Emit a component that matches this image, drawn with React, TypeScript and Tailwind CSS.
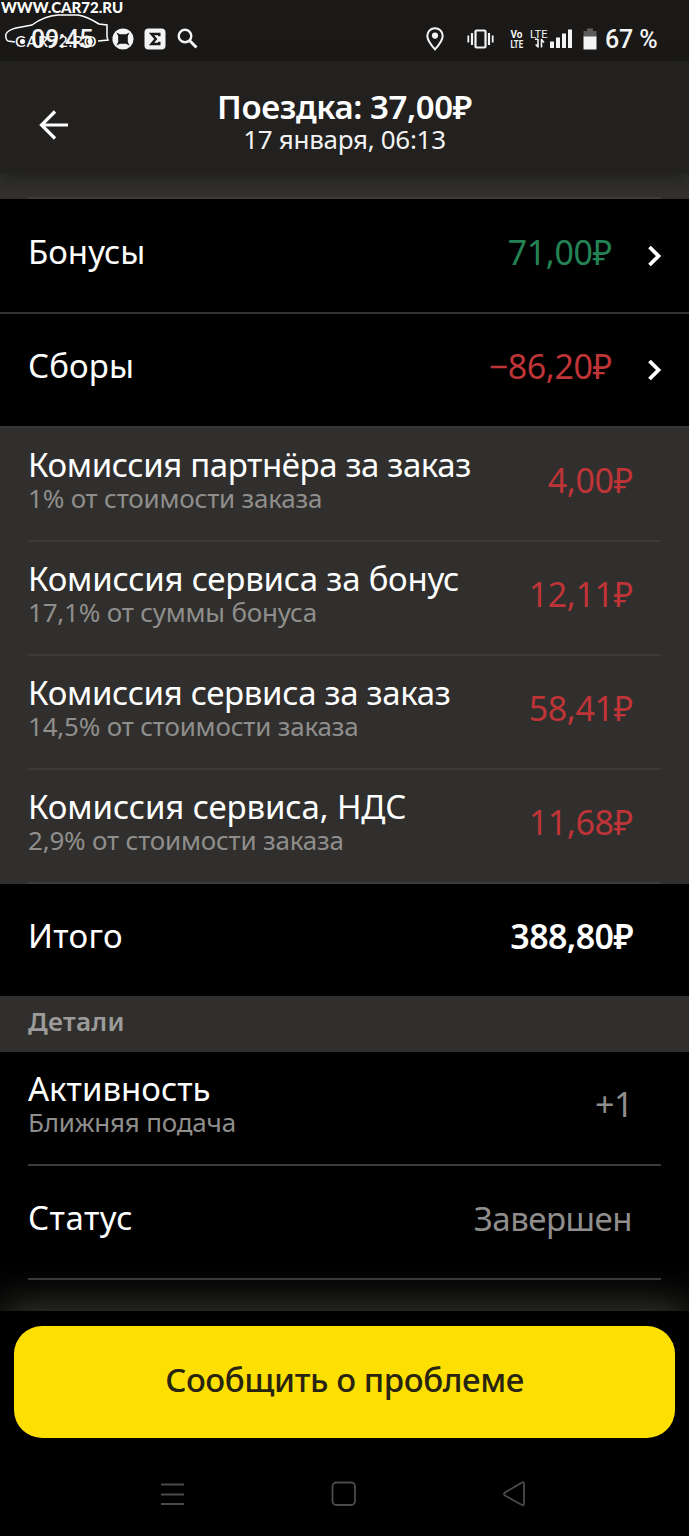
import type { ReactNode } from "react";

function Chevron() {
  return (
    <svg className="h-[24px] w-[16px] shrink-0" viewBox="0 0 16 24" fill="none" stroke="#fff" strokeWidth="3.8">
      <path d="M2.5 3 11.5 12 2.5 21" />
    </svg>
  );
}

function Watermark() {
  return (
    <div className="absolute top-0 left-0 h-[54px] w-[130px] text-white">
      <span className="absolute top-[-3px] left-[1px] font-[Lato,sans-serif] text-[15px] leading-[20px] font-black tracking-[0px] whitespace-nowrap">WWW.CAR72.RU</span>
      <svg className="absolute top-[12px] left-[4px] h-[38px] w-[106px]" viewBox="0 0 106 38" fill="none" stroke="#fff" strokeWidth="1.5">
        <path d="M11 30 4 29Q1 27 2 22 4 18 12 16L28 13Q40 4 54 3H74Q82 4 95 12L103 13V25L104 28 94 29" />
        <circle cx="18.5" cy="29.5" r="2.5" fill="#fff" stroke="none" />
        <circle cx="86" cy="29.5" r="2.5" fill="#fff" stroke="none" />
      </svg>
      <span className="absolute top-[32px] left-[15px] font-[Lato,sans-serif] text-[16px] leading-[18px] tracking-[0.7px] whitespace-nowrap">CAR72.RO</span>
    </div>
  );
}

function StatusBar() {
  return (
    <div className="relative h-[61px] shrink-0 bg-[#1a1918] text-[#f4f4f4]">
      <div className="flex h-full items-center pt-[16px] pl-[31px]">
        <span className="w-[64px] pt-[2px] font-[Roboto,sans-serif] text-[25px] leading-[30px] font-medium tracking-[-0.3px]">09:45</span>
        <svg className="ml-[17px] size-[22px]" viewBox="0 0 22 22">
          <circle cx="11" cy="11" r="10.6" fill="#f4f4f4" />
          <path d="M4.5 4.5 8 6.2H14L17.5 4.5 15.8 8V14L17.5 17.5 14 15.8H8L4.5 17.5 6.2 14V8Z" fill="#1a1918" />
        </svg>
        <svg className="ml-[10px] size-[22px]" viewBox="0 0 22 22">
          <rect x="0.5" y="0.5" width="21" height="21" rx="4" fill="#f4f4f4" />
          <path d="M15.3 8.2V6H7.5L11.8 11 7.5 16H15.3V13.8" fill="none" stroke="#1a1918" strokeWidth="2.4" />
        </svg>
        <svg className="ml-[11px] size-[21px]" viewBox="0 0 21 21" fill="none" stroke="#f4f4f4">
          <circle cx="8" cy="8" r="6.3" strokeWidth="2.4" />
          <path d="M12.5 12.5 19.5 19.5" strokeWidth="3" />
        </svg>
        <svg className="ml-[228px] h-[24px] w-[18px]" viewBox="0 0 18 24">
          <path d="M9 1.3C4.6 1.3 1.3 4.6 1.3 8.8 1.3 14 9 22.4 9 22.4S16.7 14 16.7 8.8C16.7 4.6 13.4 1.3 9 1.3Z" fill="none" stroke="#f4f4f4" strokeWidth="2" />
          <circle cx="9" cy="8.6" r="3.1" fill="#f4f4f4" />
        </svg>
        <svg className="ml-[23px] h-[20px] w-[27px]" viewBox="0 0 27 20" fill="none" stroke="#f4f4f4" strokeWidth="2.2">
          <rect x="8.5" y="1.5" width="10" height="17" rx="1" />
          <path d="M5 4v12M22 4v12" />
          <path d="M1.3 6.5v7M25.7 6.5v7" strokeWidth="1.8" />
        </svg>
        <svg className="ml-[16px] h-[20px] w-[14px]" viewBox="0 0 14 20" fill="#f4f4f4" fontFamily="Roboto, sans-serif" fontSize="11" fontWeight="700">
          <text x="0.5" y="9" textLength="12" lengthAdjust="spacingAndGlyphs">Vo</text>
          <text x="0.5" y="18.5" textLength="12.5" lengthAdjust="spacingAndGlyphs">LTE</text>
        </svg>
        <svg className="ml-[6px] h-[20px] w-[43px]" viewBox="0 0 43 20" fill="#f4f4f4">
          <text x="0" y="8.6" fontSize="11" fontFamily="Roboto, sans-serif" textLength="17.5" lengthAdjust="spacingAndGlyphs">LTE</text>
          <path d="M8 10v8.5M5 10.3H8M11.5 18.5v-8.5M11.5 10.5l2.5 3M8 18l-2.3-2.5" fill="none" stroke="#f4f4f4" strokeWidth="1.6" />
          <path d="M20 12.5h4V19H20zM26 8.500h4V19H26zM32 4.500h4V19H32zM38 .5h4V19H38z" />
        </svg>
        <svg className="ml-[10px] h-[22px] w-[14px]" viewBox="0 0 14 22">
          <path d="M4 .5h6V3h3.5v6H.5V3H4z" fill="#5c5b5a" />
          <path d="M.5 8.5h13V21.5H.5z" fill="#f4f4f4" />
        </svg>
        <span className="ml-[8px] pt-[2px] font-[Roboto,sans-serif] text-[25px] leading-[30px] font-medium tracking-[-0.1px] whitespace-nowrap">67 %</span>
      </div>
      <Watermark />
    </div>
  );
}

function Header() {
  return (
    <header className="relative z-10 flex h-[112px] shrink-0 items-start bg-[#22211f] shadow-[0_4px_16px_rgba(20,20,19,0.7)]">
      <svg className="mt-[49px] ml-[38px] h-[30px] w-[32px]" viewBox="0 0 32 30" fill="none" stroke="#fff" strokeWidth="3.2">
        <path d="M30 15H4M17 1.5 3.5 15 17 28.5" />
      </svg>
      <div className="mr-[70px] flex flex-1 flex-col items-center pt-[28px]">
        <h1 className="text-[33px] leading-[36px] font-semibold tracking-[-0.4px] whitespace-nowrap text-white">Поездка: 37,00₽</h1>
        <p className="mt-[-2px] text-[26px] leading-[32px] tracking-[-0.3px] whitespace-nowrap text-[#f2f2f2]">17 января, 06:13</p>
      </div>
    </header>
  );
}

function SummaryRow({ label, labelClass, children, className }: { label: string; labelClass: string; children: ReactNode; className: string }) {
  return (
    <div className={`flex shrink-0 items-center justify-between pb-[8px] pl-[28px] ${className}`}>
      <span className={`text-[33px] leading-[40px] text-white ${labelClass}`}>{label}</span>
      {children}
    </div>
  );
}

type Detail = { title: string; note: string; value: string; titleClass: string };

function DetailRow({ title, note, value, titleClass, valueClass }: Detail & { valueClass: string }) {
  return (
    <div className="mx-[28px] flex h-[114px] shrink-0 justify-between border-b-2 border-[#3c3b3a]">
      <div className="pt-[20px] whitespace-nowrap">
        <div className={`text-[33px] leading-[34px] text-white ${titleClass}`}>{title}</div>
        <div className="mt-[-1px] text-[26px] leading-[34px] tracking-[-0.2px] text-[#8f8e8c]">{note}</div>
      </div>
      <div className={`mr-[28px] pt-[32px] text-[34px] leading-[40px] tracking-[-0.4px] whitespace-nowrap ${valueClass}`}>{value}</div>
    </div>
  );
}

const fees: Detail[] = [
  { title: "Комиссия партнёра за заказ", note: "1% от стоимости заказа", value: "4,00₽", titleClass: "tracking-[-0.4px]" },
  { title: "Комиссия сервиса за бонус", note: "17,1% от суммы бонуса", value: "12,11₽", titleClass: "tracking-[-0.23px]" },
  { title: "Комиссия сервиса за заказ", note: "14,5% от стоимости заказа", value: "58,41₽", titleClass: "tracking-[-0.34px]" },
  { title: "Комиссия сервиса, НДС", note: "2,9% от стоимости заказа", value: "11,68₽", titleClass: "tracking-[-0.12px]" },
];

export default function App() {
  return (
    <div className="flex h-[1536px] w-[689px] flex-col overflow-hidden bg-black font-['Noto_Sans','Open_Sans',sans-serif]">
      <StatusBar />
      <Header />
      <div className="flex h-[26px] shrink-0 items-end bg-[#31302e] px-[28px]">
        <div className="h-[2px] flex-1 bg-[#3f3e3d]" />
      </div>
      <SummaryRow label="Бонусы" labelClass="tracking-[0px]" className="h-[115px] border-b-2 border-[#343332]">
        <div className="flex items-center pr-[26px]">
          <span className="mr-[35px] text-[34px] leading-[40px] tracking-[-0.4px] text-[#238354]">71,00₽</span>
          <div className="pt-[8px]"><Chevron /></div>
        </div>
      </SummaryRow>
      <SummaryRow label="Сборы" labelClass="tracking-[0.1px]" className="h-[112px]">
        <div className="flex items-center pr-[26px]">
          <span className="mr-[35px] text-[34px] leading-[40px] tracking-[-0.4px] text-[#bf3437]">−86,20₽</span>
          <div className="pt-[8px]"><Chevron /></div>
        </div>
      </SummaryRow>
      <div className="flex h-[458px] shrink-0 flex-col bg-[#302f2d]">
        <div className="h-[2px] shrink-0 bg-[#383736]" />
        {fees.map((fee) => (
          <DetailRow key={fee.title} {...fee} valueClass="text-[#bf3437]" />
        ))}
      </div>
      <SummaryRow label="Итого" labelClass="tracking-[0.3px]" className="h-[112px]">
        <span className="mr-[56px] text-[34px] leading-[40px] font-semibold tracking-[-0.6px] text-white">388,80₽</span>
      </SummaryRow>
      <div className="flex h-[56px] shrink-0 items-center bg-[#302f2d] pb-[5px] pl-[28px] text-[26px] font-semibold tracking-[0.3px] text-[#9c9b99]">Детали</div>
      <DetailRow title="Активность" note="Ближняя подача" value="+1" valueClass="text-[#8f8e8c]" titleClass="tracking-[0px]" />
      <SummaryRow label="Статус" labelClass="tracking-[0.5px]" className="h-[112px]">
        <span className="mr-[57px] pt-[2px] text-[33px] leading-[40px] tracking-[-0.5px] text-[#8f8e8c]">Завершен</span>
      </SummaryRow>
      <div className="h-[33px] shrink-0 px-[28px]">
        <div className="h-[2px] bg-[#3c3b3a]" />
      </div>
      <footer className="relative z-10 flex flex-1 flex-col bg-black shadow-[0_-6px_40px_#3a3a35]">
        <div className="shrink-0 px-[14px] pt-[15px]">
          <button className="flex h-[112px] w-full items-center justify-center rounded-[28px] bg-[#fde002] pb-[5px] text-[33px] font-medium tracking-[-0.42px] text-[#29240f]">Сообщить о проблеме</button>
        </div>
        <nav className="flex flex-1 items-start justify-between pt-[42px] pr-[161px] pl-[159px]">
          <svg className="size-[28px]" viewBox="0 0 28 28" stroke="#4b4b4b" strokeWidth="1.8"><path d="M2 4.5H25M2 14.5H25M2 24H25" /></svg>
          <svg className="size-[28px]" viewBox="0 0 28 28" fill="none" stroke="#4b4b4b" strokeWidth="1.8"><rect x="2.5" y="2.5" width="22.5" height="22.5" rx="4" /></svg>
          <svg className="size-[28px]" viewBox="0 0 28 28" fill="none" stroke="#4b4b4b" strokeWidth="1.8" strokeLinejoin="round"><path d="M22 2.5Q24 1.5 24 4V23.5Q24 26 22 25L5 15.5Q3 14 5 12.5Z" /></svg>
        </nav>
      </footer>
    </div>
  );
}
